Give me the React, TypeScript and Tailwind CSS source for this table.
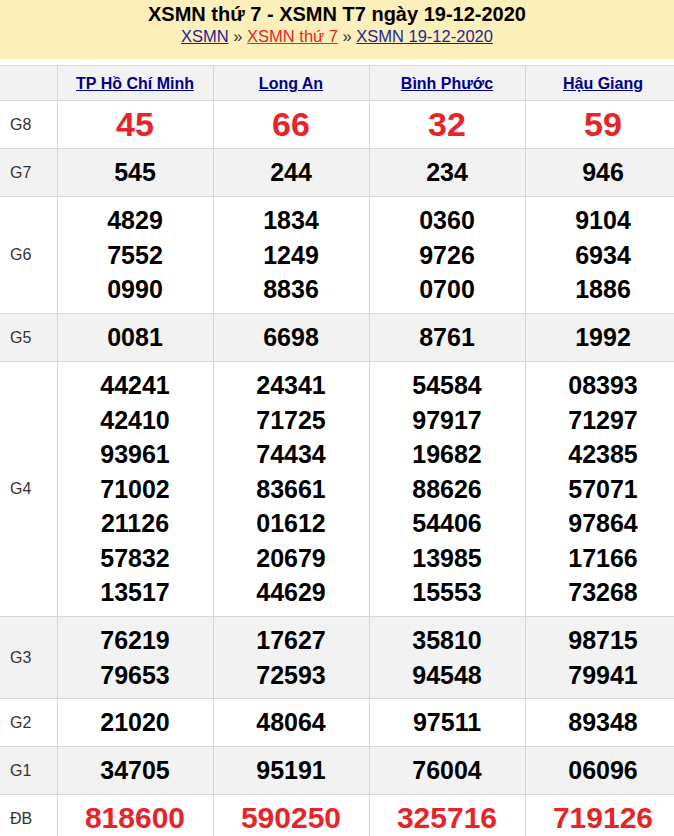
import React from "react";

type Row = { label: string; values: string[][]; h: string; big?: "g8" | "db" };

const provinces = ["TP Hồ Chí Minh", "Long An", "Bình Phước", "Hậu Giang"];

const rows: Row[] = [
  { label: "G8", h: "h-[48px]", values: [["45"], ["66"], ["32"], ["59"]], big: "g8" },
  { label: "G7", h: "h-[48px]", values: [["545"], ["244"], ["234"], ["946"]] },
  {
    label: "G6",
    h: "h-[117px]",
    values: [
      ["4829", "7552", "0990"],
      ["1834", "1249", "8836"],
      ["0360", "9726", "0700"],
      ["9104", "6934", "1886"],
    ],
  },
  { label: "G5", h: "h-[48px]", values: [["0081"], ["6698"], ["8761"], ["1992"]] },
  {
    label: "G4",
    h: "h-[255px]",
    values: [
      ["44241", "42410", "93961", "71002", "21126", "57832", "13517"],
      ["24341", "71725", "74434", "83661", "01612", "20679", "44629"],
      ["54584", "97917", "19682", "88626", "54406", "13985", "15553"],
      ["08393", "71297", "42385", "57071", "97864", "17166", "73268"],
    ],
  },
  {
    label: "G3",
    h: "h-[82px]",
    values: [
      ["76219", "79653"],
      ["17627", "72593"],
      ["35810", "94548"],
      ["98715", "79941"],
    ],
  },
  { label: "G2", h: "h-[48px]", values: [["21020"], ["48064"], ["97511"], ["89348"]] },
  { label: "G1", h: "h-[48px]", values: [["34705"], ["95191"], ["76004"], ["06096"]] },
  { label: "ĐB", h: "h-[48px]", values: [["818600"], ["590250"], ["325716"], ["719126"]], big: "db" },
];

export default function App() {
  return (
    <div className="w-[674px] overflow-hidden bg-white font-['Liberation_Sans',Arial,sans-serif] text-black">
      {/* title band */}
      <div className="flex h-[59px] flex-col items-center bg-[#fcefb9] pt-[2px]">
        <h1 className="text-[20px] font-bold leading-[24px] text-black">
          XSMN thứ 7 - XSMN T7 ngày 19-12-2020
        </h1>
        <div className="text-[16.5px] leading-[21px] text-[#333]">
          <a className="text-[#1f1f9a] underline">XSMN</a>
          {" » "}
          <a className="text-[#e5252a] underline">XSMN thứ 7</a>
          {" » "}
          <a className="text-[#1f1f9a] underline">XSMN 19-12-2020</a>
        </div>
      </div>

      {/* results table — runs a few px past the right edge like the original page */}
      <table className="mt-[6px] w-[681px] table-fixed border-collapse">
        <colgroup>
          <col className="w-[57px]" />
          <col className="w-[156px]" />
          <col className="w-[156px]" />
          <col className="w-[156px]" />
          <col className="w-[156px]" />
        </colgroup>
        <thead>
          <tr className="h-[35px] bg-[#f2f2f2]">
            <th className="border border-[#d6d6d6] border-l-0" />
            {provinces.map((p) => (
              <th
                key={p}
                className="border border-[#d6d6d6] pt-[2px] text-center text-[16px] font-bold text-[#00008b]"
              >
                <a className="underline">{p}</a>
              </th>
            ))}
          </tr>
        </thead>
        <tbody>
          {rows.map((r, i) => (
            <tr key={r.label} className={`${r.h} ${i % 2 === 1 ? "bg-[#f2f2f2]" : "bg-white"}`}>
              <td className="border border-l-0 border-[#d6d6d6] pl-[10px] text-[16px] text-[#333]">
                {r.label}
              </td>
              {r.values.map((vals, j) => (
                <td key={j} className="border border-[#d6d6d6] text-center font-bold">
                  {vals.map((v) => (
                    <div
                      key={v}
                      className={
                        r.big === "g8"
                          ? "text-[34px] leading-[34.5px] text-[#e5252a]"
                          : r.big === "db"
                          ? "text-[30px] leading-[34.5px] text-[#e5252a]"
                          : "text-[25px] leading-[34.5px]"
                      }
                    >
                      {v}
                    </div>
                  ))}
                </td>
              ))}
            </tr>
          ))}
        </tbody>
      </table>
    </div>
  );
}
